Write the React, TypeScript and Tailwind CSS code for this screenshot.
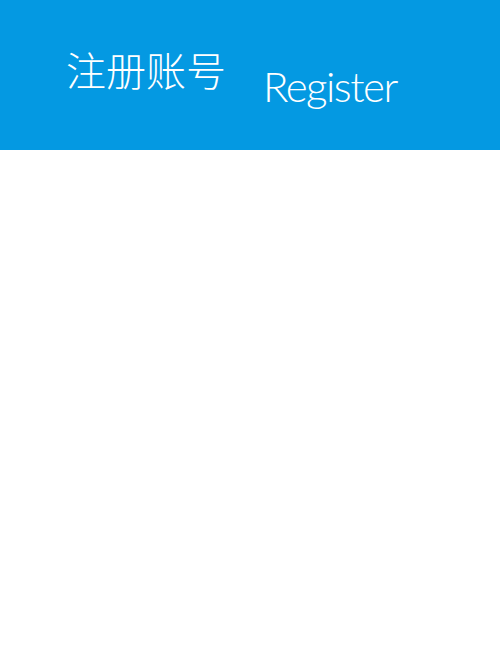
export default function App() {
  return (
    <div className="w-[500px] h-[650px] bg-white">
      <header className="h-[150px] bg-[#0499e2] flex items-start pl-[66px] text-white">
        <h1
          className="mt-[43px] text-[40px] leading-[52px] font-light"
          style={{ fontFamily: '"Noto Sans CJK SC", sans-serif' }}
        >
          注册账号
        </h1>
        <span
          className="ml-[37px] mt-[57px] text-[42px] leading-[58px] font-light tracking-[-1.5px]"
          style={{ fontFamily: 'Lato, sans-serif' }}
        >
          Register
        </span>
      </header>
    </div>
  );
}
